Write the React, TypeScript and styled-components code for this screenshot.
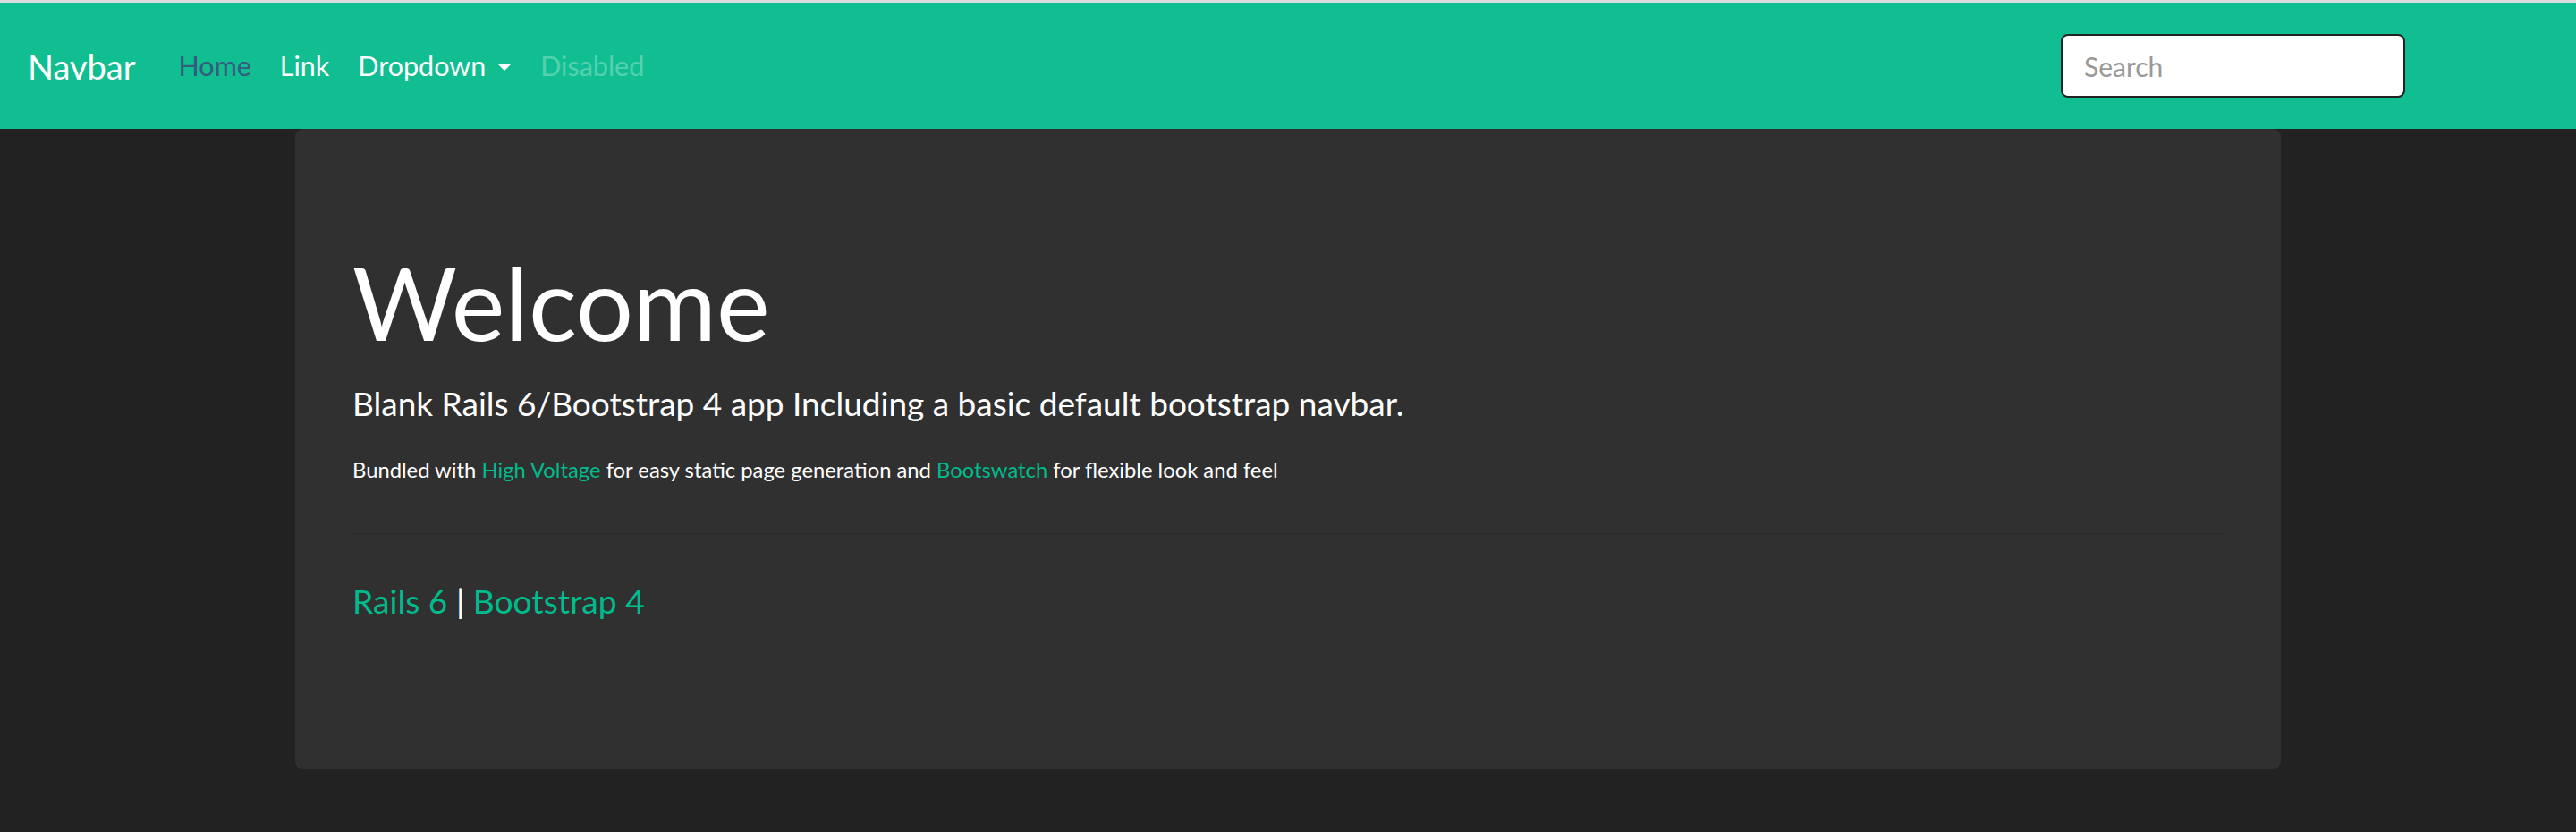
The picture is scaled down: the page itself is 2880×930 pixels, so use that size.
import React from "react";
import styled, { createGlobalStyle } from "styled-components";

const COLORS = {
  navbar: "#10be91",
  page: "#222222",
  card: "#303030",
  link: "#00bc8c",
  active: "#375a7f",
  muted: "rgba(255, 255, 255, 0.3)",
};

const GlobalStyle = createGlobalStyle`
  html, body {
    margin: 0;
    padding: 0;
    background: ${COLORS.page};
    font-family: Lato, "Open Sans", "Liberation Sans", sans-serif;
    color: #fff;
  }
  * {
    box-sizing: border-box;
  }
`;

const TopStripe = styled.div`
  height: 3px;
  background: #dcdcdc;
`;

const StyledNavbar = styled.nav`
  display: flex;
  align-items: center;
  height: 141px;
  padding: 0 191px 0 31px;
  background: ${COLORS.navbar};
`;

const Brand = styled.a`
  font-size: 38px;
  line-height: 1;
  color: #fff;
  margin-right: 32px;
  text-decoration: none;
`;

const NavList = styled.ul`
  display: flex;
  align-items: center;
  margin: 0;
  padding: 0;
  list-style: none;
`;

const NavLink = styled.a<{ $tone?: "active" | "disabled" }>`
  display: flex;
  align-items: center;
  padding: 0 16px;
  font-size: 30.5px;
  line-height: 1.5;
  text-decoration: none;
  color: ${({ $tone }) =>
    $tone === "active" ? COLORS.active : $tone === "disabled" ? COLORS.muted : "#fff"};
`;

const Caret = styled.span`
  display: inline-block;
  margin-left: 13px;
  margin-top: 2px;
  border-top: 8px solid #fff;
  border-left: 8.5px solid transparent;
  border-right: 8.5px solid transparent;
`;

const SearchForm = styled.form`
  margin-left: auto;
  display: flex;
`;

const SearchInput = styled.input`
  width: 385px;
  height: 71px;
  padding: 0 24px;
  border: 2px solid #222;
  border-radius: 8px;
  background: #fff;
  font-family: inherit;
  font-size: 30px;
  color: #444;
  outline: none;
  &::placeholder {
    color: #999;
  }
`;

const Jumbotron = styled.main`
  width: 2220px;
  height: 716px;
  margin: 0 auto;
  padding: 126px 64px 0;
  background: ${COLORS.card};
  border-radius: 9px;
`;

const Title = styled.h1`
  margin: 0;
  font-size: 113px;
  font-weight: 400;
  line-height: 1.2;
`;

const Lead = styled.p`
  margin: 17px 0 0;
  font-size: 37px;
  line-height: 1.5;
`;

const Note = styled.p`
  margin: 30px 0 0;
  font-size: 23.8px;
  line-height: 1.5;
`;

const Divider = styled.hr`
  margin: 52px 0 0;
  border: 0;
  height: 2px;
  background: #2b2b2b;
`;

const Versions = styled.p`
  margin: 46px 0 0;
  font-size: 37.2px;
  line-height: 1.5;
`;

const GreenLink = styled.a`
  color: ${COLORS.link};
  text-decoration: none;
`;

export default function App() {
  return (
    <>
      <GlobalStyle />
      <TopStripe />
      <StyledNavbar>
        <Brand href="#">Navbar</Brand>
        <NavList>
          <li>
            <NavLink href="#" $tone="active">Home</NavLink>
          </li>
          <li>
            <NavLink href="#">Link</NavLink>
          </li>
          <li>
            <NavLink href="#">
              Dropdown
              <Caret />
            </NavLink>
          </li>
          <li>
            <NavLink $tone="disabled">Disabled</NavLink>
          </li>
        </NavList>
        <SearchForm onSubmit={(e) => e.preventDefault()}>
          <SearchInput type="search" placeholder="Search" aria-label="Search" />
        </SearchForm>
      </StyledNavbar>
      <Jumbotron>
        <Title>Welcome</Title>
        <Lead>Blank Rails 6/Bootstrap 4 app Including a basic default bootstrap navbar.</Lead>
        <Note>
          Bundled with <GreenLink href="#">High Voltage</GreenLink> for easy static page generation and{" "}
          <GreenLink href="#">Bootswatch</GreenLink> for flexible look and feel
        </Note>
        <Divider />
        <Versions>
          <GreenLink href="#">Rails 6</GreenLink> | <GreenLink href="#">Bootstrap 4</GreenLink>
        </Versions>
      </Jumbotron>
    </>
  );
}
